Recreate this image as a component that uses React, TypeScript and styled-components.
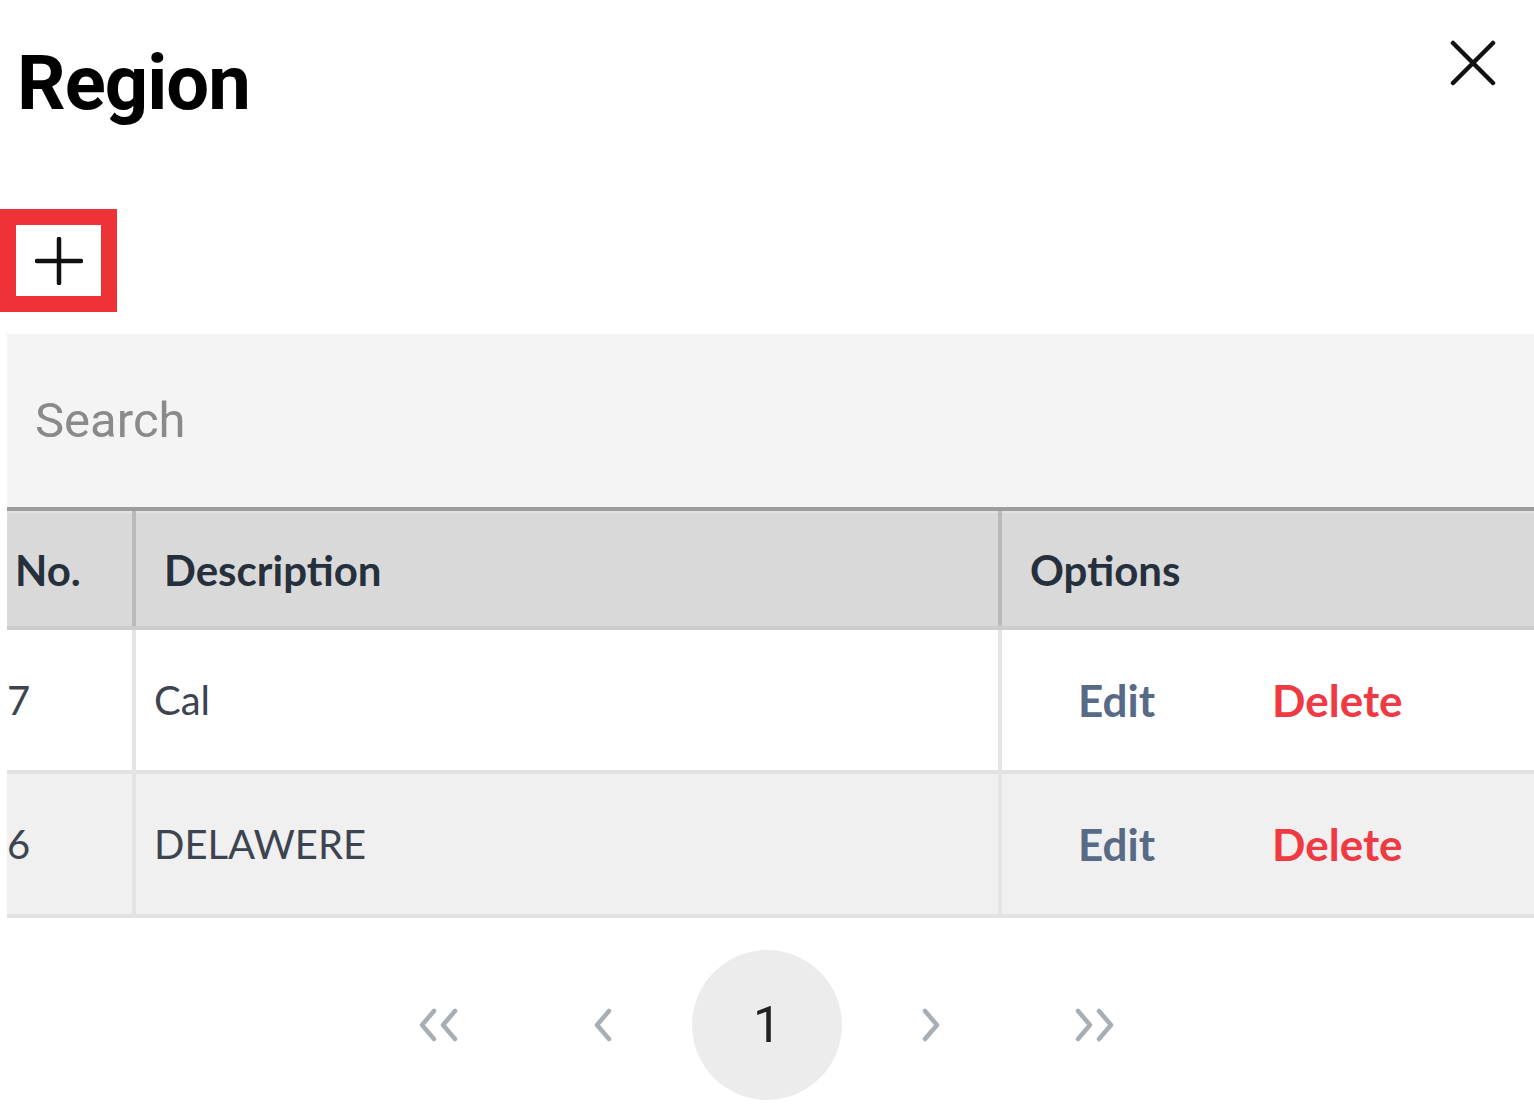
import styled, { createGlobalStyle } from "styled-components";

const GlobalStyle = createGlobalStyle`
  body {
    margin: 0;
    background: #ffffff;
    font-family: Roboto, "Liberation Sans", sans-serif;
  }
`;

const rows = [
  { id: 7, description: "Cal" },
  { id: 6, description: "DELAWERE" },
];

const Chevron = ({ dir, double }: { dir: "left" | "right"; double?: boolean }) => {
  const w = double ? 42 : 20;
  const shape = (x: number) =>
    dir === "left" ? `M${x + 16} 3 L${x + 4} 17 L${x + 16} 31` : `M${x + 4} 3 L${x + 16} 17 L${x + 4} 31`;
  return (
    <svg width={w} height="34" viewBox={`0 0 ${w} 34`}>
      <g fill="none" stroke="#a8afb4" strokeWidth="4.5" strokeLinecap="round" strokeLinejoin="round">
        <path d={shape(0)} />
        {double && <path d={shape(21)} />}
      </g>
    </svg>
  );
};

const App = () => {
  return (
    <Page>
      <GlobalStyle />
      <TitleBar>
        <Title>Region</Title>
        <CloseButton aria-label="close">
          <svg width="46" height="46" viewBox="0 0 46 46">
            <path d="M3 3 L43 43 M43 3 L3 43" stroke="#111" strokeWidth="4.5" strokeLinecap="round" />
          </svg>
        </CloseButton>
      </TitleBar>
      <AddButton aria-label="add">
        <svg width="48" height="48" viewBox="0 0 48 48">
          <path d="M24 2 V46 M2 24 H46" stroke="#111" strokeWidth="4.5" strokeLinecap="round" />
        </svg>
      </AddButton>
      <Panel>
        <SearchInput placeholder="Search" />
        <Table>
          <colgroup>
            <col style={{ width: 127 }} />
            <col style={{ width: 866 }} />
            <col />
          </colgroup>
          <thead>
            <tr>
              <HeadCell>No.</HeadCell>
              <HeadCell $wide>Description</HeadCell>
              <HeadCell $wide>Options</HeadCell>
            </tr>
          </thead>
          <tbody>
            {rows.map((row, i) => (
              <Row key={row.id} $striped={i % 2 === 1}>
                <NumberCell>{row.id}</NumberCell>
                <Cell>{row.description}</Cell>
                <Cell>
                  <Options>
                    <EditLink>Edit</EditLink>
                    <DeleteLink>Delete</DeleteLink>
                  </Options>
                </Cell>
              </Row>
            ))}
          </tbody>
        </Table>
      </Panel>
      <Pager>
        <PageArrow><Chevron dir="left" double /></PageArrow>
        <PageArrow><Chevron dir="left" /></PageArrow>
        <PageNumber>1</PageNumber>
        <PageArrow><Chevron dir="right" /></PageArrow>
        <PageArrow><Chevron dir="right" double /></PageArrow>
      </Pager>
    </Page>
  );
};

export default App;

const Page = styled.div`
  width: 1534px;
  height: 1115px;
  overflow: hidden;
  display: flex;
  flex-direction: column;
`;

const TitleBar = styled.div`
  display: flex;
  justify-content: space-between;
  align-items: flex-start;
  padding: 38px 38px 0 17px;
  height: 173px;
  box-sizing: border-box;
`;

const Title = styled.h1`
  margin: 0;
  font-family: Roboto, "Liberation Sans", sans-serif;
  font-weight: 700;
  font-size: 76px;
  line-height: 90px;
  color: #000;
  letter-spacing: -1px;
`;

const CloseButton = styled.button`
  border: none;
  background: none;
  padding: 0;
  margin-top: 2px;
  display: flex;
  cursor: pointer;
`;

const AddButton = styled.button`
  width: 117px;
  height: 103px;
  margin-top: 36px;
  border: 16px solid #ee3338;
  background: #fff;
  display: flex;
  align-items: center;
  justify-content: center;
  box-sizing: border-box;
  padding: 0;
  cursor: pointer;
`;

const Panel = styled.div`
  margin: 22px 0 0 7px;
  overflow: hidden;
`;

const SearchInput = styled.input`
  display: block;
  width: 100%;
  height: 177px;
  box-sizing: border-box;
  border: none;
  border-bottom: 4px solid #9c9c9c;
  background: #f4f4f4;
  padding: 0 28px;
  font-family: Roboto, "Liberation Sans", sans-serif;
  font-size: 49px;
  outline: none;

  &::placeholder {
    color: #8a8a8a;
  }
`;

const Table = styled.table`
  width: 1560px;
  border-collapse: collapse;
  table-layout: fixed;
  font-family: Lato, "Open Sans", sans-serif;
  border-top: 2px solid #e2e2e2;
`;

const HeadCell = styled.th<{ $wide?: boolean }>`
  height: 113px;
  background: #d9d9d9;
  text-align: left;
  padding: 0 0 0 ${(p) => (p.$wide ? "28px" : "8px")};
  font-size: 42px;
  font-weight: 700;
  color: #26303c;
  border-left: 4px solid #bdb9b9;
  border-bottom: 4px solid #cccccc;

  &:first-child {
    border-left: none;
  }
`;

const Row = styled.tr<{ $striped?: boolean }>`
  background: ${(p) => (p.$striped ? "#f0f0f0" : "#ffffff")};
  border-bottom: 4px solid #e2e2e2;
`;

const Cell = styled.td`
  height: 140px;
  padding: 0 0 0 18px;
  font-size: 40px;
  color: #3d4450;
  border-left: 4px solid #e4e4e4;
  vertical-align: middle;
`;

const NumberCell = styled(Cell)`
  padding: 0;
  border-left: none;
`;

const Options = styled.div`
  display: flex;
  gap: 117px;
  padding-left: 58px;
  font-size: 44px;
`;

const EditLink = styled.span`
  font-weight: 700;
  color: #576a86;
  cursor: pointer;
`;

const DeleteLink = styled.span`
  font-weight: 700;
  color: #ef3a44;
  cursor: pointer;
`;

const Pager = styled.div`
  display: flex;
  align-items: center;
  justify-content: center;
  gap: 14px;
  margin-top: 32px;
`;

const PageArrow = styled.span`
  width: 150px;
  display: flex;
  justify-content: center;
  align-items: center;
`;

const PageNumber = styled.span`
  width: 150px;
  height: 150px;
  border-radius: 50%;
  background: #ececec;
  display: flex;
  align-items: center;
  justify-content: center;
  font-family: Roboto, "Liberation Sans", sans-serif;
  font-size: 50px;
  color: #222;
`;
